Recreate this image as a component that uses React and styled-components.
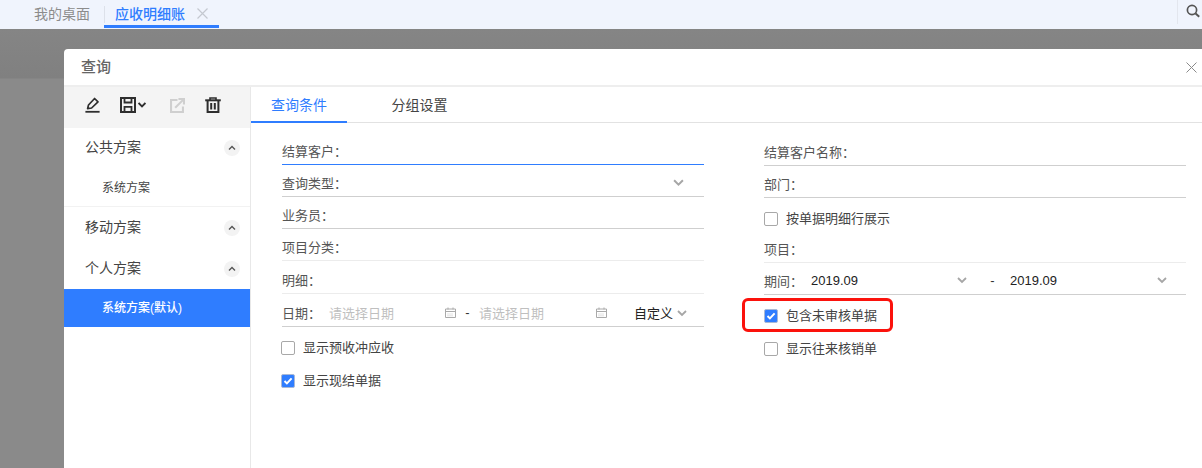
import React from "react";
import styled, { createGlobalStyle } from "styled-components";

const GlobalStyle = createGlobalStyle`
  html, body {
    margin: 0;
    padding: 0;
    height: 100%;
    overflow: hidden;
    background: #878787;
    font-family: "Liberation Sans", "Noto Sans CJK SC", sans-serif;
  }
  * { box-sizing: border-box; }
`;

const BLUE = "#2f7dff";

const Page = styled.div`
  width: 1202px;
  height: 468px;
  display: flex;
  flex-direction: column;
  overflow: hidden;
`;

const TopBar = styled.div`
  height: 29px;
  flex: none;
  display: flex;
  align-items: stretch;
  background: #f0f4fd;
  padding-left: 34px;
`;

const HomeTab = styled.div`
  width: 70px;
  font-size: 14px;
  line-height: 28px;
  color: #8c8c8c;
`;

const OpenTab = styled.div`
  width: 115px;
  height: 28px;
  display: flex;
  align-items: center;
  gap: 12px;
  padding: 1px 0 0 11px;
  font-size: 14px;
  font-weight: 500;
  color: ${BLUE};
  border-bottom: 3px solid ${BLUE};
  position: relative;
  &::before {
    content: "";
    position: absolute;
    left: 0;
    top: 6px;
    height: 17px;
    width: 1px;
    background: #dde1ea;
  }
`;

const SearchBox = styled.div`
  margin-left: auto;
  width: 25px;
  height: 24px;
  border-left: 1px solid #e3e6ee;
  padding: 4px 0 0 8px;
`;

const Backdrop = styled.div`
  flex: 1;
  padding: 20px 0 0 64px;
  background: linear-gradient(#858585 0, #808080 49px, #8a8a8a 50px);
`;

const Modal = styled.div`
  width: 1138px;
  height: 430px;
  background: #fff;
  border-top-left-radius: 4px;
  display: flex;
  flex-direction: column;
`;

const ModalHeader = styled.div`
  height: 38px;
  flex: none;
  display: flex;
  align-items: center;
  justify-content: space-between;
  padding: 0 5px 0 17px;
  border-bottom: 2px solid #eeeeee;
  font-size: 15px;
  font-weight: 500;
  color: #666;
`;

const ModalTitle = styled.span`
  padding-bottom: 3px;
`;

const ModalBody = styled.div`
  flex: 1;
  display: flex;
`;

const Sidebar = styled.aside`
  width: 187px;
  flex: none;
  border-right: 1px solid #e8e8e8;
`;

const Toolbar = styled.div`
  height: 41px;
  display: flex;
  align-items: center;
  background: #f4f4f4;
  padding: 0 0 5px 21px;
`;

const ToolIcon = styled.svg`
  display: block;
  flex: none;
  margin-right: ${(props) => props.$gap}px;
`;

const GroupTitle = styled.div`
  height: ${(props) => props.$height}px;
  display: flex;
  align-items: center;
  justify-content: space-between;
  padding: 0 10px 0 21px;
  font-size: 14px;
  color: #444;
`;

const GroupLabel = styled.span`
  padding-bottom: 4px;
`;

const CollapseDot = styled.span`
  width: 16px;
  height: 16px;
  border-radius: 50%;
  background: #f3f3f3;
  display: flex;
  align-items: center;
  justify-content: center;
`;

const PlanItem = styled.div`
  height: ${(props) => props.$height}px;
  display: flex;
  align-items: center;
  padding: 0 0 ${(props) => (props.$active ? 4 : 2)}px 38px;
  font-size: 12px;
  font-weight: ${(props) => (props.$active ? 500 : 400)};
  color: ${(props) => (props.$active ? "#fff" : "#444")};
  background: ${(props) => (props.$active ? BLUE : "transparent")};
  border-bottom: ${(props) => (props.$divider ? "1px solid #f2f2f2" : "0")};
`;

const Content = styled.main`
  flex: 1;
  min-width: 0;
`;

const Tabs = styled.div`
  height: 36px;
  display: flex;
  border-bottom: 1px solid #e2e2e2;
`;

const Tab = styled.div`
  width: ${(props) => props.$width}px;
  height: 36px;
  font-size: 14px;
  line-height: 36px;
  text-align: center;
  color: ${(props) => (props.$active ? BLUE : "#444")};
  border-bottom: ${(props) => (props.$active ? `2px solid ${BLUE}` : "0")};
`;

const Form = styled.div`
  display: grid;
  grid-template-columns: 422px 422px;
  column-gap: 60px;
  padding: 10px 0 0 31px;
`;

const Column = styled.div`
  padding-top: ${(props) => props.$top || 0}px;
`;

const FieldRow = styled.div`
  height: ${(props) => props.$height || 32}px;
  display: flex;
  align-items: center;
  padding-top: ${(props) => props.$top || 3}px;
  font-size: 13px;
  color: #555;
  border-bottom: 1px solid ${(props) => props.$line || "#cfcfcf"};
`;

const FieldLabel = styled.span`
  flex: none;
  width: ${(props) => props.$width}px;
`;

const Chevron = styled.svg`
  display: block;
  flex: none;
  margin-left: ${(props) => props.$left || 0}px;
`;

const Calendar = styled.svg`
  display: block;
  flex: none;
`;

const Placeholder = styled.span`
  width: ${(props) => props.$width}px;
  color: #bfbfbf;
  flex: none;
`;

const Dash = styled.span`
  flex: none;
  width: ${(props) => props.$width}px;
  padding-left: ${(props) => props.$pad || 0}px;
  color: #333;
  text-align: center;
`;

const Value = styled.span`
  flex: none;
  width: ${(props) => props.$width}px;
  margin-left: ${(props) => props.$left || 0}px;
  color: #222;
`;

const CheckRow = styled.div`
  height: ${(props) => props.$height || 33}px;
  display: flex;
  align-items: center;
  gap: 8px;
  margin-left: ${(props) => props.$left || 0}px;
  padding-top: ${(props) => props.$top || 0}px;
  font-size: 13px;
  color: #444;
  position: relative;
`;

const CheckText = styled.span`
  padding-bottom: 3px;
`;

const Highlight = styled.span`
  position: absolute;
  left: -22px;
  top: 3px;
  width: 151px;
  height: 34px;
  border: 3px solid #fb120c;
  border-radius: 6px;
`;

const Box = styled.span`
  width: 14px;
  height: 14px;
  flex: none;
  border-radius: 2px;
  border: 1px solid ${(props) => (props.$checked ? "#a9b9d6" : "#a8a8a8")};
  background: ${(props) => (props.$checked ? BLUE : "#fff")};
  display: flex;
  align-items: center;
  justify-content: center;
`;

const ChevronDown = ({ left, size = 10, color = "#a6a6a6" }) => (
  <Chevron $left={left} width={size} height={size} viewBox="0 0 10 10" fill="none">
    <path d="M1 3l4 4 4-4" stroke={color} strokeWidth="1.8" />
  </Chevron>
);

const CalendarIcon = () => (
  <Calendar width="11" height="11" viewBox="0 0 11 11" fill="none">
    <path d="M.5 2h10v8.5H.5zM.5 4.5h10M3 .5v2M8 .5v2" stroke="#aaa" />
    <path d="M2.5 7h6M2.5 8.8h6" stroke="#c6c6c6" strokeDasharray="1 1" />
  </Calendar>
);

const Check = ({ checked, children }) => (
  <>
    <Box $checked={checked}>
      {checked && (
        <svg width="10" height="10" viewBox="0 0 10 10" fill="none">
          <path d="M1.5 5l2.4 2.4L8.6 2.4" stroke="#fff" strokeWidth="2" />
        </svg>
      )}
    </Box>
    <CheckText>{children}</CheckText>
  </>
);

const Group = ({ title, height }) => (
  <GroupTitle $height={height}>
    <GroupLabel>{title}</GroupLabel>
    <CollapseDot>
      <svg width="8" height="8" viewBox="0 0 8 8" fill="none">
        <path d="M1 5.5l3-3 3 3" stroke="#555" strokeWidth="1.4" />
      </svg>
    </CollapseDot>
  </GroupTitle>
);

export default function App() {
  return (
    <Page>
      <GlobalStyle />
      <TopBar>
        <HomeTab>我的桌面</HomeTab>
        <OpenTab>
          应收明细账
          <svg width="11" height="11" viewBox="0 0 11 11" fill="none">
            <path d="M.5.5l10 10M10.5.5l-10 10" stroke="#c4c8d0" strokeWidth="1.2" />
          </svg>
        </OpenTab>
        <SearchBox>
          <svg width="15" height="15" viewBox="0 0 15 15" fill="none">
            <circle cx="6" cy="6" r="4.6" stroke="#555" strokeWidth="1.7" />
            <path d="M9.6 9.6l3.6 3.2" stroke="#555" strokeWidth="2" />
          </svg>
        </SearchBox>
      </TopBar>
      <Backdrop>
        <Modal>
          <ModalHeader>
            <ModalTitle>查询</ModalTitle>
            <svg width="11" height="11" viewBox="0 0 11 11" fill="none">
              <path d="M.5.5l10 10M10.5.5l-10 10" stroke="#8a8a8a" />
            </svg>
          </ModalHeader>
          <ModalBody>
            <Sidebar>
              <Toolbar>
                <ToolIcon $gap={20} width="15" height="16" viewBox="0 0 15 16" fill="none">
                  <path d="M2.6 11.6l.9-3.6L9.6 1.5 13 4.8l-6.4 6.2z" stroke="#2e2e2e" strokeWidth="1.7" strokeLinejoin="round" />
                  <path d="M0.4 14.8h14.2" stroke="#2e2e2e" strokeWidth="1.8" />
                </ToolIcon>
                <ToolIcon $gap={2} width="16" height="16" viewBox="0 0 16 16" fill="none">
                  <path d="M1 1h14v14H1z" stroke="#2e2e2e" strokeWidth="2" />
                  <path d="M4.5 1.5v4h7v-4" stroke="#2e2e2e" strokeWidth="1.8" />
                  <path d="M4.5 15v-5.2h7V15" stroke="#2e2e2e" strokeWidth="1.8" />
                </ToolIcon>
                <ToolIcon $gap={24} width="8" height="8" viewBox="0 0 8 8" fill="none">
                  <path d="M.6 2l3.4 3.4L7.4 2" stroke="#2e2e2e" strokeWidth="1.8" />
                </ToolIcon>
                <ToolIcon $gap={20} width="15" height="15" viewBox="0 0 16 16" fill="none">
                  <path d="M8 2.2H1.1v12.7h12.7V9" stroke="#cfcfcf" strokeWidth="2.2" />
                  <path d="M5.5 10.5L14 2M9 1.1h5.9v5.9" stroke="#cfcfcf" strokeWidth="2.2" />
                </ToolIcon>
                <ToolIcon $gap={0} width="16" height="16" viewBox="0 0 16 16" fill="none">
                  <path d="M0.2 3.3h15.6" stroke="#2e2e2e" strokeWidth="2" />
                  <path d="M5 3V1h6v2" stroke="#2e2e2e" strokeWidth="1.6" />
                  <path d="M2.6 3.5V15h10.8V3.5" stroke="#2e2e2e" strokeWidth="2" />
                  <path d="M6.2 6v6.5M9.8 6v6.5" stroke="#2e2e2e" strokeWidth="2" />
                </ToolIcon>
              </Toolbar>
              <Group title="公共方案" height={40} />
              <PlanItem $height={39} $divider>系统方案</PlanItem>
              <Group title="移动方案" height={42} />
              <Group title="个人方案" height={40} />
              <PlanItem $height={38} $active>系统方案(默认)</PlanItem>
            </Sidebar>
            <Content>
              <Tabs>
                <Tab $width={96} $active>查询条件</Tab>
                <Tab $width={145}>分组设置</Tab>
              </Tabs>
              <Form>
                <Column>
                  <FieldRow $line={BLUE}>结算客户：</FieldRow>
                  <FieldRow>
                    查询类型：
                    <ChevronDown left={326} size={11} />
                  </FieldRow>
                  <FieldRow>业务员：</FieldRow>
                  <FieldRow $line="#ececec">项目分类：</FieldRow>
                  <FieldRow $line="#ececec" $height={33} $top={4}>明细：</FieldRow>
                  <FieldRow $height={33} $top={5}>
                    <FieldLabel $width={47}>日期：</FieldLabel>
                    <Placeholder $width={116}>请选择日期</Placeholder>
                    <CalendarIcon />
                    <Dash $width={23}>-</Dash>
                    <Placeholder $width={117}>请选择日期</Placeholder>
                    <CalendarIcon />
                    <Value $width={43} $left={27}>自定义</Value>
                    <ChevronDown />
                  </FieldRow>
                  <CheckRow $height={42} $left={-1}>
                    <Check>显示预收冲应收</Check>
                  </CheckRow>
                  <CheckRow $height={24} $left={-1}>
                    <Check checked>显示现结单据</Check>
                  </CheckRow>
                </Column>
                <Column $top={1}>
                  <FieldRow>结算客户名称：</FieldRow>
                  <FieldRow>部门：</FieldRow>
                  <CheckRow $top={9}>
                    <Check>按单据明细行展示</Check>
                  </CheckRow>
                  <FieldRow $line="#ececec">项目：</FieldRow>
                  <FieldRow>
                    <FieldLabel $width={47}>期间：</FieldLabel>
                    <Value $width={146}>2019.09</Value>
                    <ChevronDown />
                    <Dash $width={43} $pad={8}>-</Dash>
                    <Value $width={147}>2019.09</Value>
                    <ChevronDown />
                  </FieldRow>
                  <CheckRow $height={42}>
                    <Highlight />
                    <Check checked>包含未审核单据</Check>
                  </CheckRow>
                  <CheckRow $height={24}>
                    <Check>显示往来核销单</Check>
                  </CheckRow>
                </Column>
              </Form>
            </Content>
          </ModalBody>
        </Modal>
      </Backdrop>
    </Page>
  );
}
